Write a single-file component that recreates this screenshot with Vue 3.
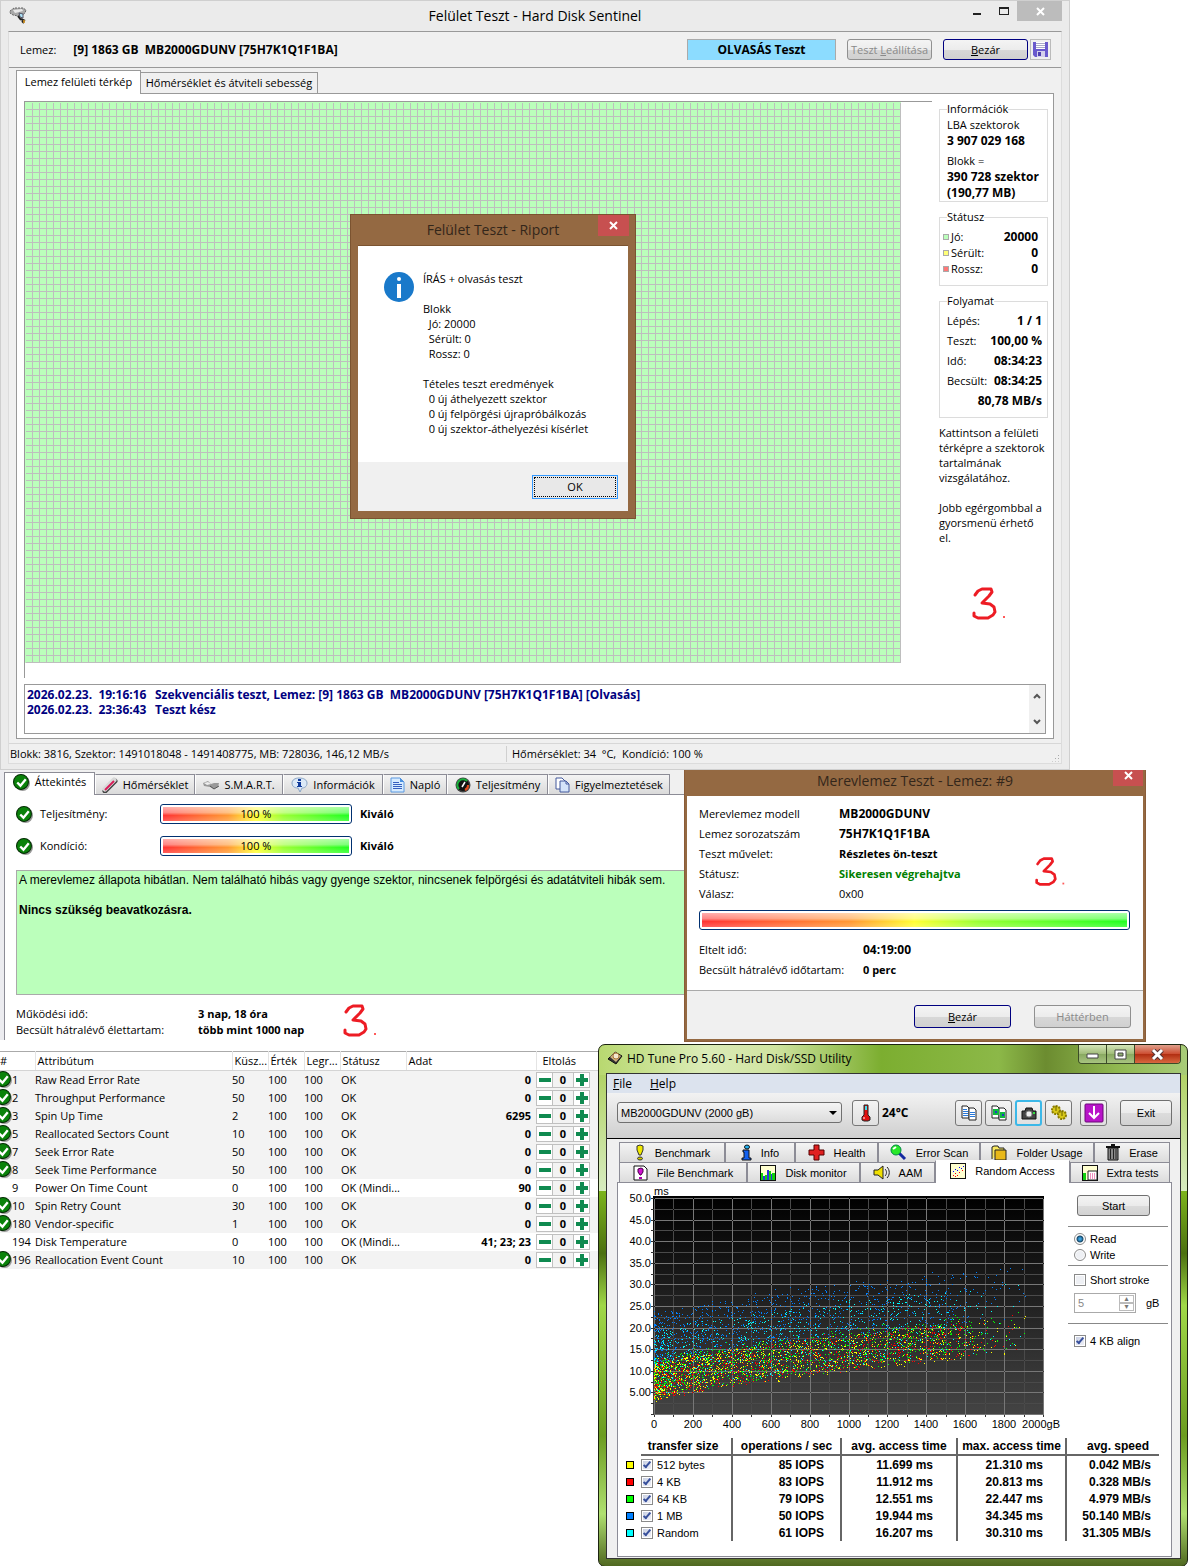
<script setup>
const infoLog = [
  { time: '2026.02.23.  19:16:16', text: 'Szekvenciális teszt, Lemez: [9] 1863 GB  MB2000GDUNV [75H7K1Q1F1BA] [Olvasás]' },
  { time: '2026.02.23.  23:36:43', text: 'Teszt kész' },
]

const blockStates = [
  { label: 'Jó:', count: '20000', tone: 'good' },
  { label: 'Sérült:', count: '0', tone: 'weak' },
  { label: 'Rossz:', count: '0', tone: 'bad' },
]

const progress = [
  { label: 'Lépés:', value: '1 / 1' },
  { label: 'Teszt:', value: '100,00 %' },
  { label: 'Idő:', value: '08:34:23' },
  { label: 'Becsült:', value: '08:34:25' },
  { label: '', value: '80,78 MB/s' },
]

const report = `ÍRÁS + olvasás teszt

Blokk
  Jó: 20000
  Sérült: 0
  Rossz: 0

Tételes teszt eredmények
  0 új áthelyezett szektor
  0 új felpörgési újrapróbálkozás
  0 új szektor-áthelyezési kísérlet`

const smart = [
  ['1', 'Raw Read Error Rate', '50', 'OK', '0'],
  ['2', 'Throughput Performance', '50', 'OK', '0'],
  ['3', 'Spin Up Time', '2', 'OK', '6295'],
  ['5', 'Reallocated Sectors Count', '10', 'OK', '0'],
  ['7', 'Seek Error Rate', '50', 'OK', '0'],
  ['8', 'Seek Time Performance', '50', 'OK', '0'],
  ['9', 'Power On Time Count', '0', 'OK (Mindi...', '90'],
  ['10', 'Spin Retry Count', '30', 'OK', '0'],
  ['180', 'Vendor-specific', '1', 'OK', '0'],
  ['194', 'Disk Temperature', '0', 'OK (Mindi...', '41; 23; 23'],
  ['196', 'Reallocation Event Count', '10', 'OK', '0'],
].map(([id, name, threshold, status, data]) => ({
  id, name, threshold, status, data, info: status !== 'OK',
}))

const results = [
  { name: '512 bytes', tone: 'yellow', ops: '85 IOPS', avg: '11.699 ms', max: '21.310 ms', speed: '0.042 MB/s' },
  { name: '4 KB', tone: 'red', ops: '83 IOPS', avg: '11.912 ms', max: '20.813 ms', speed: '0.328 MB/s' },
  { name: '64 KB', tone: 'green', ops: '79 IOPS', avg: '12.551 ms', max: '22.447 ms', speed: '4.979 MB/s' },
  { name: '1 MB', tone: 'blue', ops: '50 IOPS', avg: '19.944 ms', max: '34.345 ms', speed: '50.140 MB/s' },
  { name: 'Random', tone: 'cyan', ops: '61 IOPS', avg: '16.207 ms', max: '30.310 ms', speed: '31.305 MB/s' },
]

// Chart geometry: origin at (36, 228), 2000 gB over 389 px, 50 ms over 216 px.
const X0 = 36
const Y0 = 228
const px = (gb) => Math.round(X0 + (gb * 389) / 2000)
const py = (ms) => Math.round(Y0 - (ms * 216) / 50)

const yTicks = ['50.0', '45.0', '40.0', '35.0', '30.0', '25.0', '20.0', '15.0', '10.0', '5.00']
  .map((label, i) => ({ label, y: py(50 - i * 5) }))
const xTicks = [0, 200, 400, 600, 800, 1000, 1200, 1400, 1600, 1800]
  .map((gb) => ({ label: String(gb), x: px(gb) }))

const lines = (offset) => {
  let d = ''
  for (let gb = offset * 200; gb <= 2000; gb += 200) d += `M${px(gb)} 12v216h1v-216z`
  for (let ms = offset * 5; ms <= 50; ms += 5) d += `M36 ${py(ms)}h390v1h-390z`
  return d
}
const minorGrid = lines(0.5)
const majorGrid = lines(0)
const ticks = Array.from({ length: 21 }, (_, i) => `M33 ${py(i * 2.5)}h3v1h-3z`).join('')
  + Array.from({ length: 21 }, (_, i) => `M${px(i * 100)} 229v2h1v-2z`).join('')

function scatter(seed, count, low, spread) {
  let s = seed
  const rnd = () => {
    s = (s * 1664525 + 1013904223) % 4294967296
    return s / 4294967296
  }
  let d = ''
  for (let i = 0; i < count; i++) {
    const limit = 1500 + 480 * Math.pow(rnd(), 2)
    const gb = limit * Math.pow(rnd(), 1.4)
    const floor = 2.6 + 7 * Math.pow(gb / 1000, 0.75)
    const ms = floor + low + rnd() * spread + rnd() * rnd() * 2
    d += `M${px(gb)} ${py(ms)}h1v1h-1z`
  }
  return d
}
const clouds = [
  { fill: '#0080ff', d: scatter(11, 1000, 8, 12) },
  { fill: '#00ffff', d: scatter(57, 900, 1, 15) },
  { fill: '#00ff00', d: scatter(301, 1000, 0.6, 8.6) },
  { fill: '#ff0000', d: scatter(907, 850, 0.1, 8.4) },
  { fill: '#ffff00', d: scatter(4021, 950, 0, 8.5) },
]
</script>

<template>
  <svg class="defs" aria-hidden="true">
    <symbol id="ok" viewBox="0 0 16 16">
      <circle cx="9" cy="9" r="7" fill="#999" />
      <circle cx="7.500" cy="7.500" r="7" fill="#0a820a" stroke="#042c04" />
      <path d="M4 8l3 3 5-6" fill="none" stroke="#fff" stroke-width="2.200" />
    </symbol>
    <symbol id="three" viewBox="0 0 36 36">
      <path d="M4 9l3-4 4-2h9l1 3-3 4-7 7 8 1 4 3 1 5-2 3-5 3H7l-4-2v-3" fill="none" stroke="#ed1c24" stroke-width="3" stroke-linecap="round" stroke-linejoin="round" />
      <rect x="32" y="30" width="2" height="2" fill="#ff5a5a" />
    </symbol>
  </svg>

  <main class="page">
    <section class="sentinel">
      <header class="titlebar">
        <svg width="20" height="20" viewBox="0 0 20 20">
          <path d="M1 5l4-3h9l3 2-1 3-4 3-3 0-5-1-3-2z" fill="#a9a9a9" stroke="#666" stroke-dasharray="2 1" />
          <path d="M4 4l9-1 1 2-8 2z" fill="#e8e8e8" />
          <path d="M10 7l4 1v4l-3-1z" fill="#aee4f8" stroke="#556" />
          <path d="M9 10l3 4M12 13l4 2M13 15l2 2" stroke="#222" stroke-width="2" />
          <path d="M15 14v3" stroke="#e8a020" stroke-width="1.500" />
        </svg>
        <h1>Felület Teszt - Hard Disk Sentinel</h1>
        <div class="caption">
          <button aria-label="Minimize"><i class="min"></i></button>
          <button aria-label="Maximize"><i class="max"></i></button>
          <button class="close" aria-label="Close"><svg width="9" height="9" viewBox="0 0 9 9"><path d="M1 1l7 7M8 1l-7 7" stroke="#fff" stroke-width="2" /></svg></button>
        </div>
      </header>

      <div class="client">
        <div class="diskbar">
          <span>Lemez:</span>
          <b>[9] 1863 GB&nbsp; MB2000GDUNV [75H7K1Q1F1BA]</b>
          <div class="mode">OLVASÁS Teszt</div>
          <button class="btn" disabled><span>Teszt <u>L</u>eállítása</span></button>
          <button class="btn primary"><u>B</u>ezár</button>
          <button class="save" aria-label="Mentés">
            <svg width="15" height="15" viewBox="0 0 15 15">
              <path d="M0 0h15v15H2l-2-2z" fill="#6a5acd" />
              <path d="M3 0h9v7H3z" fill="#fff" /><path d="M3 1.500h9M3 3.500h9M3 5.500h9" stroke="#a9a9c8" />
              <path d="M4 9h8v6H4z" fill="#d4d0ec" /><path d="M5 10h3v4H5z" fill="#5040b0" />
            </svg>
          </button>
        </div>

        <nav class="maptabs">
          <button class="on">Lemez felületi térkép</button>
          <button>Hőmérséklet és átviteli sebesség</button>
        </nav>

        <div class="mappage">
          <div class="maprow">
            <div class="mapframe"><div class="map"></div></div>
            <aside class="info">
              <fieldset>
                <legend>Információk</legend>
                <p>LBA szektorok</p>
                <p><b>3 907 029 168</b></p>
                <p class="gap">Blokk =</p>
                <p><b>390 728 szektor</b></p>
                <p><b>(190,77 MB)</b></p>
              </fieldset>
              <fieldset class="states">
                <legend>Státusz</legend>
                <div v-for="s in blockStates" :key="s.label" class="state">
                  <i :class="s.tone"></i><span>{{ s.label }}</span><b>{{ s.count }}</b>
                </div>
              </fieldset>
              <fieldset class="flow">
                <legend>Folyamat</legend>
                <div v-for="p in progress" :key="p.value" class="step">
                  <span>{{ p.label }}</span><b>{{ p.value }}</b>
                </div>
              </fieldset>
              <p class="hint">Kattintson a felületi térképre a szektorok tartalmának vizsgálatához.</p>
              <p class="hint">Jobb egérgombbal a gyorsmenü érhető el.</p>
              <svg class="mark mark-a" width="36" height="40"><use href="#three" /></svg>
            </aside>
          </div>
          <div class="log">
            <div class="entries">
              <p v-for="l in infoLog" :key="l.time"><span>{{ l.time }}</span>{{ l.text }}</p>
            </div>
            <div class="scroll">
              <svg width="9" height="6"><path d="M1 5l3-3 3 3" fill="none" stroke="#555" stroke-width="2" /></svg>
              <svg width="9" height="6"><path d="M1 1l3 3 3-3" fill="none" stroke="#555" stroke-width="2" /></svg>
            </div>
          </div>
        </div>

        <footer class="statusbar">
          <span>Blokk: 3816, Szektor: 1491018048 - 1491408775, MB: 728036, 146,12 MB/s</span>
          <span>Hőmérséklet: 34&nbsp; °C,&nbsp; Kondíció: 100 %</span>
          <i class="grip"></i>
        </footer>
      </div>

      <div class="report" role="dialog" aria-label="Felület Teszt - Riport">
        <header>
          <h2>Felület Teszt - Riport</h2>
          <button class="redclose" aria-label="Bezárás"><svg width="9" height="9" viewBox="0 0 9 9"><path d="M1 1l7 7M8 1l-7 7" stroke="#fff" stroke-width="2" /></svg></button>
        </header>
        <div class="reportbody">
          <svg width="30" height="30" viewBox="0 0 30 30">
            <circle cx="15" cy="15" r="15" fill="#1979ca" />
            <circle cx="15" cy="7" r="2" fill="#fff" /><path d="M13 12h4v14h-4z" fill="#fff" />
          </svg>
          <p>{{ report }}</p>
        </div>
        <footer><button class="okbtn"><span>OK</span></button></footer>
      </div>
    </section>

    <div class="middle">
      <section class="overview">
        <nav class="tabs">
          <button class="on"><svg width="17" height="17"><use href="#ok" /></svg>Áttekintés</button>
          <button>
            <svg width="16" height="16" viewBox="0 0 16 16"><path d="M3 14L13 4" stroke="#444" stroke-width="5" stroke-linecap="round" /><path d="M3 12L12 3" stroke="#d8d8d8" stroke-width="5" stroke-linecap="round" /><path d="M3 13L12 4" stroke="#d81e5a" stroke-width="2" /></svg>
            Hőmérséklet
          </button>
          <button>
            <svg width="16" height="16" viewBox="0 0 16 16"><path d="M0 6l5-2 3 3 3-1 5 0-1 4-4 2-4-2-6-1z" fill="#999" /><path d="M1 6l4-1 3 2-4 1z" fill="#eee" /><path d="M7 9l4 3 5-3" stroke="#555" fill="none" /></svg>
            S.M.A.R.T.
          </button>
          <button>
            <svg width="17" height="16" viewBox="0 0 17 16"><path d="M8 1c5 0 8 2 8 5 0 4-3 5-5 5l-2 4-2-4C3 11 1 9 1 6s3-5 7-5z" fill="#dce9f7" stroke="#8aa4c4" /><path d="M7 2h3v2H7zM6 5h4v4h1v1H6V9h1V6H6z" fill="#123c9c" /></svg>
            Információk
          </button>
          <button>
            <svg width="15" height="16" viewBox="0 0 15 16"><path d="M1 1h9l4 4v10H1z" fill="#d6ebff" stroke="#5a98e0" /><path d="M10 1l4 4h-4z" fill="#4a90e0" /><path d="M3 5.500h6M3 7.500h9M3 9.500h9M3 11.500h9" stroke="#3560c0" /></svg>
            Napló
          </button>
          <button>
            <svg width="16" height="16" viewBox="0 0 16 16"><circle cx="8" cy="8" r="7.500" fill="#444" /><circle cx="8" cy="8" r="6" fill="#111" /><path d="M4 12A5 5 0 0 1 12 4" fill="none" stroke="#17b03a" stroke-width="2" /><path d="M13 8a5 5 0 0 1-3 5" fill="none" stroke="#e04a1a" stroke-width="2" /><path d="M7 10l3-5" stroke="#fff" stroke-width="1.500" /></svg>
            Teljesítmény
          </button>
          <button>
            <svg width="15" height="16" viewBox="0 0 15 16"><path d="M1 1h6l3 3v8H1z" fill="#fff" stroke="#43589c" /><path d="M5 4h6l3 3v8H5z" fill="#d4e4fa" stroke="#43589c" /><path d="M11 4v3h3" fill="none" stroke="#43589c" /></svg>
            Figyelmeztetések
          </button>
        </nav>
        <div class="health">
          <div class="meter"><svg width="17" height="17"><use href="#ok" /></svg><span>Teljesítmény:</span><div class="bar"><i></i><em>100 %</em></div><b>Kiváló</b></div>
          <div class="meter"><svg width="17" height="17"><use href="#ok" /></svg><span>Kondíció:</span><div class="bar"><i></i><em>100 %</em></div><b>Kiváló</b></div>
          <div class="verdict">
            <p>A merevlemez állapota hibátlan. Nem található hibás vagy gyenge szektor, nincsenek felpörgési és adatátviteli hibák sem.</p>
            <p><b>Nincs szükség beavatkozásra.</b></p>
          </div>
          <dl class="life">
            <dt>Működési idő:</dt><dd>3 nap, 18 óra</dd>
            <dt>Becsült hátralévő élettartam:</dt><dd>több mint 1000 nap</dd>
          </dl>
          <svg class="mark mark-b" width="36" height="36"><use href="#three" /></svg>
        </div>
      </section>

      <section class="selftest">
        <header>
          <h2>Merevlemez Teszt - Lemez: #9</h2>
          <button class="redclose" aria-label="Bezárás"><svg width="9" height="9" viewBox="0 0 9 9"><path d="M1 1l7 7M8 1l-7 7" stroke="#fff" stroke-width="2" /></svg></button>
        </header>
        <div class="testbody">
          <dl>
            <dt>Merevlemez modell</dt><dd>MB2000GDUNV</dd>
            <dt>Lemez sorozatszám</dt><dd>75H7K1Q1F1BA</dd>
            <dt>Teszt művelet:</dt><dd class="words">Részletes ön-teszt</dd>
            <dt>Státusz:</dt><dd class="words success">Sikeresen végrehajtva</dd>
            <dt>Válasz:</dt><dd class="plain">0x00</dd>
          </dl>
          <div class="bar"><i></i></div>
          <dl class="times">
            <dt>Eltelt idő:</dt><dd>04:19:00</dd>
            <dt>Becsült hátralévő időtartam:</dt><dd class="words">0 perc</dd>
          </dl>
          <svg class="mark mark-c" width="32" height="32"><use href="#three" /></svg>
        </div>
        <footer>
          <button class="btn primary"><u>B</u>ezár</button>
          <button class="btn" disabled>Háttérben</button>
        </footer>
      </section>
    </div>

    <div class="bottom">
      <section class="smart">
        <table>
          <thead>
            <tr><th class="num">#</th><th class="attr">Attribútum</th><th>Küsz...</th><th>Érték</th><th>Legr...</th><th class="stat">Státusz</th><th class="data">Adat</th><th class="shift">Eltolás</th></tr>
          </thead>
          <tbody>
            <tr v-for="r in smart" :key="r.id" :class="{ info: r.info }">
              <td><div class="idcell"><svg width="17" height="17"><use v-if="!r.info" href="#ok" /></svg>{{ r.id }}</div></td>
              <td>{{ r.name }}</td>
              <td>{{ r.threshold }}</td>
              <td>100</td>
              <td>100</td>
              <td class="state-cell">{{ r.status }}</td>
              <td class="val">{{ r.data }}</td>
              <td>
                <div class="spin">
                  <button aria-label="Csökkentés"><svg width="12" height="12"><path d="M0 4h12v4H0z" fill="#0f8a50" /></svg></button>
                  <b>0</b>
                  <button aria-label="Növelés"><svg width="12" height="12"><path d="M0 4h12v4H0zM4 0h4v12H4z" fill="#0f8a50" /></svg></button>
                </div>
              </td>
            </tr>
          </tbody>
        </table>
      </section>

      <section class="hdtune">
        <header class="aero">
          <svg width="16" height="16" viewBox="0 0 16 16"><path d="M1 9l7-7 7 4-6 8z" fill="#333" stroke="#111" /><path d="M3 7l5-5 6 4-5 6z" fill="#d0b080" /><circle cx="9" cy="6" r="3" fill="#f4e8d0" stroke="#a87838" /></svg>
          <h2>HD Tune Pro 5.60 - Hard Disk/SSD Utility</h2>
          <div class="aerobtns">
            <button aria-label="Minimize"><svg width="13" height="10"><path d="M1 5h11v4H1z" fill="#fff" stroke="#444" /></svg></button>
            <button aria-label="Maximize"><svg width="13" height="11"><path d="M1 1h11v9H1z" fill="#fff" stroke="#444" /><path d="M4 4h5v3H4z" fill="#8fae70" stroke="#444" /></svg></button>
            <button class="x" aria-label="Close"><svg width="13" height="11" viewBox="0 0 13 11"><path d="M2 1l9 9M11 1L2 10" stroke="#533" stroke-width="5" /><path d="M2 1l9 9M11 1L2 10" stroke="#fff" stroke-width="3" /></svg></button>
          </div>
        </header>
        <div class="tunebody">
          <nav class="menu"><a href="#"><u>F</u>ile</a><a href="#"><u>H</u>elp</a></nav>
          <div class="toolbar">
            <div class="drive">
              <select aria-label="Drive"><option>MB2000GDUNV (2000 gB)</option></select>
              <i></i>
            </div>
            <button class="tool" aria-label="Temperature"><svg width="14" height="18" viewBox="0 0 14 18"><path d="M5 1h4v10l2 2v3l-2 1H5l-2-1v-3l2-2z" fill="#e01010" stroke="#222" /><path d="M6 2h2v4H6z" fill="#40e0f0" /><path d="M5 13v2" stroke="#fff" /></svg></button>
            <b class="temp">24°C</b>
            <div class="tools">
              <button class="tool" aria-label="Copy text"><svg width="16" height="16" viewBox="0 0 16 16"><path d="M1 1h5l2 2v10H1z" fill="#fff" stroke="#222" /><path d="M8 3h5l2 2v10H8z" fill="#fff" stroke="#222" /><path d="M2 4.500h4M2 6.500h5M2 8.500h5M2 10.500h5M9 7.500h5M9 9.500h5M9 11.500h5" stroke="#2878d8" /></svg></button>
              <button class="tool" aria-label="Copy image"><svg width="16" height="16" viewBox="0 0 16 16"><path d="M1 1h5l2 2v10H1z" fill="#fff" stroke="#222" /><path d="M8 3h5l2 2v10H8z" fill="#fff" stroke="#222" /><path d="M2 4h6v6H2zM9 7h5v6H9z" fill="#10b840" /><path d="M4 6h2v2H4zM11 9h2v2h-2z" fill="#203cc0" /></svg></button>
              <button class="tool hot" aria-label="Screenshot"><svg width="16" height="14" viewBox="0 0 16 14"><path d="M1 5h3l1-3h6l1 3h3v8H1z" fill="#444" stroke="#111" /><circle cx="8" cy="8" r="3" fill="#eee" stroke="#888" /><path d="M12 6h2v2h-2z" fill="#30e040" /></svg></button>
              <button class="tool" aria-label="Options"><svg width="18" height="16" viewBox="0 0 18 16"><circle cx="6" cy="5" r="4" fill="#d8c818" stroke="#8a7c00" stroke-width="2" stroke-dasharray="2 1" /><circle cx="12" cy="10" r="4" fill="#d8c818" stroke="#8a7c00" stroke-width="2" stroke-dasharray="2 1" /><path d="M6 1v5M12 6v5" stroke="#6a6000" /></svg></button>
              <button class="tool apart" aria-label="Save"><svg width="20" height="20" viewBox="0 0 20 20"><rect x="1" y="1" width="18" height="18" rx="1" fill="#b814c8" stroke="#6a0878" /><path d="M10 3v12M5 10l5 5 5-5" fill="none" stroke="#fff" stroke-width="2" /></svg></button>
            </div>
            <button class="win exit">Exit</button>
          </div>
          <nav class="row1">
            <button><svg width="12" height="17" viewBox="0 0 12 17"><path d="M3 2l3-1 3 1v4L7 11H5L3 6z" fill="#f0e800" stroke="#333" /><ellipse cx="6" cy="14.500" rx="2.500" ry="1.500" fill="#d0c800" stroke="#333" /></svg>Benchmark</button>
            <button><svg width="11" height="17" viewBox="0 0 11 17"><ellipse cx="6" cy="3" rx="2.500" ry="2" fill="#20b0f0" stroke="#111" /><path d="M2 6h6v8h2v2H1v-2h2V8H2z" fill="#1060f0" stroke="#111" /></svg>Info</button>
            <button><svg width="17" height="17" viewBox="0 0 17 17"><path d="M6 1h5v5h5v5h-5v5H6v-5H1V6h5z" fill="#e02020" stroke="#500" /></svg>Health</button>
            <button><svg width="17" height="17" viewBox="0 0 17 17"><path d="M9 9l6 6" stroke="#1428a0" stroke-width="3" /><circle cx="6" cy="6" r="5" fill="#28e828" stroke="#084" /><path d="M3 5l3-2" stroke="#fff" stroke-width="2" /></svg>Error Scan</button>
            <button><svg width="16" height="16" viewBox="0 0 16 16"><path d="M1 14V2l2-1h4l1 2h5v2" fill="#f8e860" stroke="#222" /><path d="M4 5h11v10H4z" fill="#e8b818" stroke="#222" /></svg>Folder Usage</button>
            <button><svg width="14" height="17" viewBox="0 0 14 17"><path d="M0 3h14M5 1h4" stroke="#111" stroke-width="2" /><path d="M2 4h10v12H2z" fill="#888" stroke="#111" /><path d="M4.500 5v10M7.500 5v10M10 5v10" stroke="#222" /></svg>Erase</button>
          </nav>
          <nav class="row2">
            <button><svg width="15" height="16" viewBox="0 0 15 16"><path d="M1 1h10l3 3v11H1z" fill="#fff" stroke="#111" /><path d="M5 4l3-1 2 1v3l-2 3H7L5 7z" fill="#d010d0" stroke="#404" /><path d="M6 12h3v2H6z" fill="#a0a" /></svg>File Benchmark</button>
            <button><svg width="16" height="16" viewBox="0 0 16 16"><path d="M0 0h16v16H0z" fill="#ffffd0" stroke="#111" stroke-width="2" /><path d="M1 8h2v7H1zM5 10h2v5H5zM9 6h2v9H9zM12 8h3v7h-3z" fill="#10d010" /><path d="M3 11h2v4H3zM7 5h2v10H7zM11 9h1v6h-1z" fill="#3030e0" /></svg>Disk monitor</button>
            <button><svg width="17" height="15" viewBox="0 0 17 15"><path d="M1 5h4l5-4v13l-5-4H1z" fill="#f0e000" stroke="#222" /><path d="M12 4c2 2 2 5 0 7M14 2c3 3 3 8 0 11" fill="none" stroke="#222" /></svg>AAM</button>
            <button class="on"><svg width="16" height="16" viewBox="0 0 16 16"><path d="M0 0h16v16H0z" fill="#ffffd0" stroke="#111" stroke-width="2" /><path d="M3 12h1v1H3zM5 10h1v1H5zM7 12h1v1H7zM9 9h1v1H9zM12 7h1v1h-1zM5 13h1v1H5z" fill="#f00" /><path d="M3 8h1v1H3zM5 6h1v1H5zM7 7h1v1H7zM9 4h1v1H9zM11 5h1v1h-1zM13 3h1v1h-1z" fill="#00f" /></svg>Random Access</button>
            <button><svg width="16" height="16" viewBox="0 0 16 16"><path d="M0 0h16v16H0z" fill="#ffffd0" stroke="#111" stroke-width="2" /><path d="M1 8h3v7H1z" fill="#10d010" /><path d="M6 6h9v9H6z" fill="#fff" stroke="#222" /><path d="M8 9h6M8 11h6M8 13h6" stroke="#e02080" stroke-dasharray="1 1" /></svg>Extra tests</button>
          </nav>

          <div class="tunepage">
            <div class="upper">
              <svg class="chart" width="450" height="250" viewBox="0 0 450 250" shape-rendering="crispEdges">
                <defs><linearGradient id="night" x1="0" y1="0" x2="0" y2="1"><stop offset="0" stop-color="#000" /><stop offset="1" stop-color="#444" /></linearGradient></defs>
                <rect x="35" y="10" width="391" height="219" fill="url(#night)" />
                <path :d="minorGrid" fill="#4a4a4a" />
                <path :d="majorGrid" fill="#777" />
                <path :d="ticks" fill="#333" />
                <path v-for="c in clouds" :key="c.fill" :d="c.d" :fill="c.fill" />
                <text x="36" y="9">ms</text>
                <text v-for="t in yTicks" :key="t.label" x="33" :y="t.y + 4" text-anchor="end">{{ t.label }}</text>
                <text v-for="t in xTicks" :key="t.label" :x="t.x" y="242" text-anchor="middle">{{ t.label }}</text>
                <text x="442" y="242" text-anchor="end">2000gB</text>
              </svg>
              <div class="options">
                <button class="win start">Start</button>
                <hr>
                <label><input type="radio" name="dir" checked>Read</label>
                <label><input type="radio" name="dir">Write</label>
                <hr>
                <label class="stroke"><input type="checkbox">Short stroke</label>
                <div class="size">
                  <div class="number"><input type="text" value="5" disabled aria-label="Short stroke size"><span><i>▴</i><i>▾</i></span></div>gB
                </div>
                <hr>
                <label class="align"><input type="checkbox" checked>4 KB align</label>
              </div>
            </div>
            <table class="results">
              <thead><tr><td></td><th>transfer size</th><th>operations / sec</th><th>avg. access time</th><th>max. access time</th><th>avg. speed</th></tr></thead>
              <tbody>
                <tr v-for="r in results" :key="r.name">
                  <td><i class="swatch" :class="r.tone"></i></td>
                  <td><label><input type="checkbox" checked>{{ r.name }}</label></td>
                  <td>{{ r.ops }}</td><td>{{ r.avg }}</td><td>{{ r.max }}</td><td>{{ r.speed }}</td>
                </tr>
              </tbody>
            </table>
          </div>
        </div>
      </section>
    </div>
  </main>
</template>

<style>
body { background: #fff; }
*, *::before, *::after { box-sizing: border-box; }
</style>

<style scoped>
.page { font: 11px/16px "Open Sans", "Noto Sans", sans-serif; color: #000; }
.defs { position: absolute; width: 0; height: 0; }
h1, h2, p, dl, dd { margin: 0; font-weight: 400; }
button, input, select { font: inherit; color: inherit; margin: 0; padding: 0; border: 0; background: none; }
button { display: flex; align-items: center; justify-content: center; white-space: nowrap; }
svg { flex: none; display: block; }
.mark { position: absolute; }

.btn { width: 85px; height: 21px; border: 1px solid #707070; border-radius: 3px; background: linear-gradient(#f4f4f4, #ececec 50%, #d8d8d8 50%, #d0d0d0); }
.btn:disabled { color: #8a8a8a; border-color: #909090; }
.btn.primary { border-color: #000080; }

/* Hard Disk Sentinel window */
.sentinel { position: relative; margin-right: 118px; border: 1px solid #cfcfcf; background: #ebebeb; padding: 0 7px 5px; }
.titlebar { display: grid; grid-template-columns: 106px 1fr 106px; height: 30px; align-items: center; }
.titlebar h1 { font-size: 14px; text-align: center; }
.titlebar svg { margin-left: 1px; }
.caption { display: flex; align-self: start; justify-content: flex-end; }
.caption button { width: 27px; height: 20px; }
.caption .close { width: 45px; background: #bcbcbc; }
.caption .min { width: 8px; height: 2px; background: #222; margin-top: 6px; }
.caption .max { width: 10px; height: 8px; border: 1px solid #222; border-top-width: 2px; }
.client { background: #f0f0f0; border: 1px solid #dcdcdc; border-top: 1px solid #999; }
.diskbar { display: flex; align-items: center; height: 36px; padding: 0 10px 0 11px; border-bottom: 1px solid #999; }
.diskbar b { font-size: 12px; margin-left: 17px; }
.mode { width: 149px; height: 21px; margin: 0 11px 0 auto; background: #8cdcff; border: 1px solid #aaa; border-bottom: 0; font: bold 12px/20px "Open Sans", sans-serif; text-align: center; }
.diskbar .btn.primary { margin-left: 11px; }
.save { width: 21px; height: 21px; margin-left: 2px; border: 1px solid #bbb; }

.maptabs { display: flex; align-items: flex-end; height: 25px; padding-left: 7px; }
.maptabs button { height: 21px; width: 177px; border: 1px solid #999; border-left: 0; border-bottom: 0; }
.maptabs .on { height: 24px; width: 125px; background: #fff; border-left: 1px solid #999; padding-bottom: 2px; margin-bottom: -1px; z-index: 1; }
.mappage { margin: 0 7px; background: #fff; border: 1px solid #999; padding: 7px 5px 4px 7px; }
.maprow { display: flex; gap: 7px; height: 577px; }
.mapframe { flex: 1; border-top: 1px solid #999; border-left: 1px solid #999; }
.map {
  height: 561px; margin-right: 31px; border: 1px solid #bfb; border-width: 1px 0 0 1px;
  background:
    linear-gradient(to right, transparent 6px, #bebebe 6px) 0 0 / 7px 7px,
    linear-gradient(transparent 6px, #bebebe 6px) 0 0 / 7px 7px #bfb;
}
.info { position: relative; width: 109px; }
.info fieldset { margin: 0 0 7px; padding: 0 7px; border: 1px solid #dcdcdc; min-width: 0; height: 101px; }
.info legend { padding: 0; height: 16px; }
.info fieldset b { white-space: nowrap; font-size: 12px; }
.info .gap { margin-top: 4px; }
.info .states { height: 77px; padding: 4px 9px 0 3px; }
.states legend { margin-left: 4px; }
.state { display: flex; align-items: center; gap: 2px; }
.state i { width: 6px; height: 6px; border: 1px solid #aaa; }
.state b, .step b { margin-left: auto; }
.good { background: #bfb; }
.weak { background: #ff7; }
.bad { background: #f77; }
.info .flow { height: 125px; padding: 2px 5px 0 7px; }
.step { display: flex; line-height: 20px; }
.hint { line-height: 15px; margin-bottom: 15px; }
.mark-a { left: 32px; top: 483px; }
.log { display: flex; justify-content: space-between; height: 50px; margin: 6px 2px 0 0; border: 1px solid #999; }
.entries { padding: 2px; line-height: 15px; color: #000080; font-size: 12px; }
.entries p { font-weight: 700; white-space: pre; }
.entries span { display: inline-block; width: 128px; }
.scroll { width: 16px; background: #f0f0f0; display: flex; flex-direction: column; justify-content: space-between; align-items: center; padding: 8px 0; }
.statusbar { display: flex; align-items: center; position: relative; margin-top: 4px; height: 20px; border-top: 1px solid #d7d7d7; }
.statusbar span:first-child { width: 498px; border-right: 1px solid #d0d0d0; padding-left: 1px; }
.statusbar span + span { padding-left: 5px; }
.grip { margin: 8px 2px 0 auto; width: 8px; height: 8px; background: radial-gradient(#aaa 1px, transparent 1px) 0 0 / 3px 3px; clip-path: polygon(100% 0, 100% 100%, 0 100%); }

.report { position: absolute; left: 349px; top: 213px; width: 286px; background: #946942; border: 1px solid #7b5330; padding: 0 7px 7px; }
.report header { position: relative; height: 30px; }
.report h2, .selftest h2 { font-size: 14px; line-height: 30px; text-align: center; color: #33261a; }
.redclose { position: absolute; right: 0; top: 0; width: 31px; height: 21px; background: #c75050; }
.report .redclose { right: -1px; }
.reportbody { display: flex; gap: 9px; height: 217px; background: #fff; padding: 25px 20px 0 26px; line-height: 15px; border-top: 1px solid #7b5330; }
.reportbody svg { margin-top: 1px; }
.reportbody p { white-space: pre; }
.report footer { background: #f0f0f0; display: flex; justify-content: flex-end; padding: 13px 10px 12px; }
.okbtn { width: 86px; height: 24px; padding: 1px; border: 1px solid #3399ff; background: #e8e8e8; }
.okbtn span { flex: 1; line-height: 18px; border: 1px dotted #000; }

/* Overview panel and self-test dialog */
.middle { display: flex; margin-right: 42px; }
.overview { flex: 1; min-width: 0; padding-left: 4px; background: #ececf0; height: 270px; margin-bottom: 4px; }
.tabs { display: grid; grid-template-columns: 91px 100px 88px 100px 64px 101px 122px; align-items: end; height: 25px; background: #f0f0f0; border-bottom: 1px solid #8c8c96; }
.tabs button { height: 20px; gap: 5px; border: 1px solid #8c8c96; border-width: 1px 1px 0; border-left-color: #fff; background: linear-gradient(#f4f4f4, #dadada); }
.tabs .on { height: 23px; margin-bottom: -1px; padding-bottom: 4px; background: #fff; border-left-color: #8c8c96; }
.health { position: relative; background: #fff; border-left: 1px solid #8c8c96; height: 245px; padding: 9px 0 0 11px; }
.meter { display: flex; align-items: center; height: 20px; margin-bottom: 12px; }
.meter span { width: 120px; margin-left: 7px; }
.meter .bar { width: 192px; margin-right: 8px; }
.bar { position: relative; height: 20px; border: 1px solid #003070; border-radius: 3px; background: #fff; padding: 2px; }
.bar i { display: block; height: 100%; background: linear-gradient(rgba(255, 255, 255, .6), rgba(255, 255, 255, .4) 40%, transparent 60%, rgba(255, 255, 255, .2)), linear-gradient(to right, #f33, #f93 35%, #ff3 50%, #9f3 65%, #2f2); }
.bar em { position: absolute; inset: 0; text-align: center; font-style: normal; line-height: 18px; }
.verdict { height: 125px; margin-top: 14px; padding: 2px; border: 1px solid #aaa; border-right: 0; background: #bfb; font: 12px/15px "Liberation Sans", Arial, sans-serif; white-space: nowrap; overflow: hidden; }
.verdict p + p { margin-top: 15px; }
.life { display: grid; grid-template-columns: 182px 1fr; margin-top: 11px; }
.life dd, .selftest dd { font-weight: 700; }
.mark-b { left: 337px; top: 208px; }

.selftest { width: 462px; height: 272px; background: #946942; border: 1px solid #8a5c38; border-top: 0; padding: 0 2px 2px; display: flex; flex-direction: column; }
.selftest header { position: relative; height: 26px; overflow: hidden; }
.selftest h2 { line-height: 22px; }
.selftest .redclose { top: -5px; right: -1px; }
.testbody { position: relative; background: #fff; height: 194px; padding: 8px 13px 0 12px; }
.testbody dl { display: grid; grid-template-columns: 140px 1fr; line-height: 20px; margin-bottom: 6px; }
.testbody dd { font-size: 12px; }
.testbody .times { grid-template-columns: 164px 1fr; margin-top: 10px; }
.testbody .success { color: #008000; }
.testbody .words, .testbody .plain { font-size: 11px; }
.testbody .plain { font-weight: 400; }
.mark-c { left: 347px; top: 60px; }
.selftest footer { flex: 1; display: flex; gap: 23px; justify-content: flex-end; align-items: center; padding: 3px 12px 0 0; background: #f0f0f0; border-top: 1px solid #aaa; }
.selftest .btn { width: 97px; height: 23px; }

/* SMART attributes */
.bottom { display: flex; }
.smart { flex: 1; min-width: 0; overflow: hidden; padding-top: 7px; }
.smart table { width: 100%; border-collapse: collapse; table-layout: fixed; border-top: 1px solid #aaa; }
.smart th { width: 36px; height: 19px; padding: 0 0 0 2px; font-weight: 400; text-align: left; border-right: 1px solid #e4e4e4; border-bottom: 1px solid #d4d4d4; white-space: nowrap; }
.smart .num { width: 35px; padding: 0; }
.smart .attr { width: auto; }
.smart .stat { width: 66px; }
.smart .data { width: 130px; }
.smart .shift { width: 62px; padding-left: 6px; border-right: 0; }
.smart td { height: 18px; padding: 0 0 1px; white-space: nowrap; background: #f3f3f3; line-height: 16px; }
.smart td:last-child { padding: 0; }
.smart .info td { background: #fff; }
.smart .state-cell { padding-left: 1px; }
.smart .val { text-align: right; padding-right: 5px; font-weight: 700; }
.idcell { display: flex; margin-left: -5px; height: 17px; align-items: center; }
.spin { display: flex; width: 54px; height: 16px; border: 1px solid #c0c0c0; background: #f3f3f3; }
.spin button { width: 15px; background: #fff; }
.spin b { flex: 1; line-height: 14px; text-align: center; border: 1px solid #c0c0c0; border-width: 0 1px; }

/* HD Tune window */
.hdtune {
  width: 590px; padding: 0 6px 7px 7px; border: 1px solid #1c2410; border-radius: 7px;
  background:
    linear-gradient(to right, #b8d870, #dcecb8 18%, #d0e4a0 30%, #7cae30 48%, #8cb848 68%, #6c8c30 76%, #90b850 88%, #a8cc78) 0 0 / 100% 30px no-repeat,
    linear-gradient(#a8cc50, #d8ecc0 28%, #7cb41c 28%, #4c7010 40%, #a0d848 50%, #6c9c20 75%, #b0e070 90%, #506820);
}
.aero { display: flex; height: 28px; padding-left: 1px; }
.aero svg { margin: 5px 0 0; }
.aero h2 { font-size: 12px; line-height: 27px; margin-left: 4px; }
.aerobtns { display: flex; margin-left: auto; height: 19px; border: 1px solid #3c4c28; border-top: 0; border-radius: 0 0 4px 4px; overflow: hidden; }
.aerobtns button { width: 28px; border-right: 1px solid #3c4c28; background: linear-gradient(#d4e4b8, #a0bc78 50%, #88a860 50%, #a8c480); }
.aerobtns svg { margin: 0; }
.aerobtns .x { width: 45px; border: 0; background: linear-gradient(#e0a08c, #cc4c30 50%, #b02c10 50%, #d86840); }
.tunebody { border: 1px solid #333; background: #f0f0f0; padding-bottom: 1px; font: 11px/14px "Liberation Sans", Arial, sans-serif; }
.menu { display: flex; gap: 18px; height: 19px; padding-left: 6px; background: #dce3ee; font: 12px/19px "Open Sans", sans-serif; }
.menu a { color: #000; text-decoration: none; }
.toolbar { display: flex; align-items: center; height: 46px; padding: 0 8px 6px 10px; background: linear-gradient(#f2f2f2, #cfcfcf); border-bottom: 1px solid #000; }
.drive { position: relative; width: 225px; margin-right: 10px; }
.drive select { display: block; appearance: none; width: 100%; height: 21px; padding: 0 3px; border: 1px solid #707070; border-radius: 3px; background: linear-gradient(#f4f4f4, #dcdcdc); }
.drive i { position: absolute; right: 5px; top: 9px; border: 4px solid transparent; border-top-color: #000; border-bottom: 0; pointer-events: none; }
.tool { width: 27px; height: 26px; border: 1px solid #777; border-radius: 3px; background: linear-gradient(#f4f4f4, #e0e0e0); }
.temp { font: bold 12px/16px "Open Sans", sans-serif; margin-left: 3px; }
.tools { display: flex; gap: 3px; margin-left: auto; }
.tool.hot { border: 2px solid #3cb8e8; }
.tool.apart { margin-left: 5px; }
.win { border: 1px solid #707070; border-radius: 3px; background: linear-gradient(#f4f4f4, #ebebeb 50%, #dcdcdc 50%, #d2d2d2); }
.exit { width: 52px; height: 26px; margin-left: 13px; }
.row1, .row2 { display: grid; margin: 0 10px 0 12px; }
.row1 { grid-template-columns: 106fr 70fr 83fr 102fr 114fr 76fr; margin-top: 3px; }
.row2 { grid-template-columns: 128fr 113fr 75fr 135fr 100fr; }
.row1 button, .row2 button { height: 20px; gap: 9px; border: 1px solid #8c8c96; border-bottom: 0; background: linear-gradient(#f4f4f4, #dcdcdc); }
.row2 .on { height: 23px; margin: -2px 0 -1px; padding-bottom: 3px; z-index: 1; background: #fff; border-top-color: #fff; }
.tunepage { margin: 0 8px 0 10px; border: 1px solid #8c8c96; background: #fff; height: 375px; padding: 3px 3px 0 0; }
.upper { display: flex; justify-content: space-between; height: 250px; }
.chart text { font: 11px "Liberation Sans", Arial, sans-serif; }
.options { width: 101px; padding-top: 9px; }
.options hr { margin: 10px 0 4px; border: 0; border-top: 1px solid #888; }
.start { width: 73px; height: 21px; margin-left: 9px; }
.options label { display: flex; align-items: center; height: 16px; margin-left: 6px; gap: 4px; }
input[type="radio"], input[type="checkbox"] { appearance: none; width: 12px; height: 12px; border: 1px solid #8a8a8a; background: #eef0f4; flex: none; box-shadow: inset 0 0 0 1px #fff; }
input[type="radio"] { border-radius: 50%; }
input[type="radio"]:checked { background: radial-gradient(#38a0e0 1px, #184868 3px, #fff 4px); }
input[type="checkbox"]:checked { background: linear-gradient(135deg, #c4cce0, #f4f4fa); position: relative; }
input[type="checkbox"]:checked::after { content: ""; position: absolute; left: 3px; top: 0; width: 4px; height: 8px; border: solid #38509c; border-width: 0 2px 2px 0; rotate: 40deg; }
.options label + hr { margin: 2px 0 6px; }
.size { display: flex; align-items: center; gap: 10px; margin: 5px 0 0 6px; }
.number { display: flex; width: 62px; height: 20px; border: 1px solid #aaa; padding: 1px; }
.number input { flex: 1; min-width: 0; padding-left: 2px; color: #888; }
.number span { width: 15px; }
.number i { display: block; height: 8px; border: 1px solid #bbb; font: 8px/6px "DejaVu Sans", sans-serif; color: #777; text-align: center; }
.options .align { margin-top: 9px; }

.results { width: 536px; margin: 2px 0 0 5px; border-collapse: separate; border-spacing: 0; table-layout: fixed; font-size: 12px; font-weight: 700; }
.results th, .results td { padding: 0; text-align: right; height: 17px; border-left: 2px solid #666; white-space: nowrap; line-height: 16px; }
.results th { width: 109px; height: 18px; text-align: center; border-bottom: 2px solid #666; }
.results td:nth-child(1) { width: 18px; border: 0; text-align: left; padding-left: 3px; }
.results th:nth-child(2) { width: 90px; border-left: 0; padding-right: 6px; }
.results th:nth-child(4) { width: 116px; }
.results th:nth-child(6) { width: 94px; text-align: right; padding-right: 10px; }
.results td:nth-child(2) { border-left: 0; text-align: left; font-weight: 400; font-size: 11px; }
.results td:nth-child(3) { padding-right: 16px; }
.results td:nth-child(4) { padding-right: 23px; }
.results td:nth-child(5) { padding-right: 22px; }
.results td:nth-child(6) { padding-right: 8px; }
.results label { display: flex; align-items: center; gap: 4px; }
.swatch { display: block; width: 8px; height: 8px; border: 1px solid #000; }
.yellow { background: #ff0; }
.red { background: #f00; }
.green { background: #0f0; }
.blue { background: #0080ff; }
.cyan { background: #0ff; }
</style>
